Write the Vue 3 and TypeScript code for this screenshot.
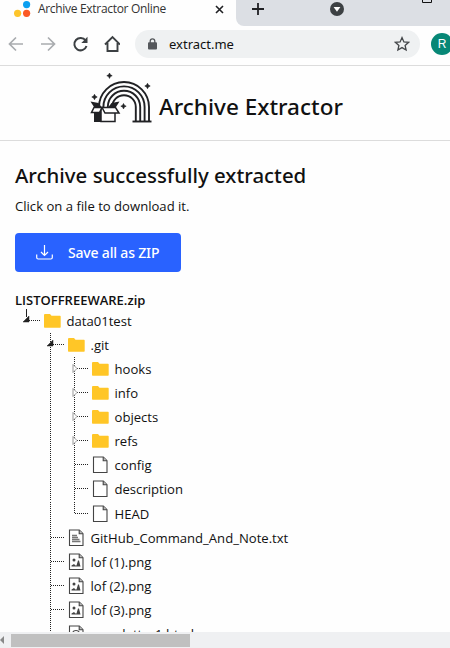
<script setup lang="ts">
type Kind = 'folder' | 'file' | 'text' | 'image' | 'html'
type Toggle = 'open' | 'closed' | 'none'
interface Row {
  name: string
  kind: Kind
  depth: number
  toggle: Toggle
  last?: boolean
}

const rows: Row[] = [
  { name: 'data01test', kind: 'folder', depth: 0, toggle: 'open', last: true },
  { name: '.git', kind: 'folder', depth: 1, toggle: 'open' },
  { name: 'hooks', kind: 'folder', depth: 2, toggle: 'closed' },
  { name: 'info', kind: 'folder', depth: 2, toggle: 'closed' },
  { name: 'objects', kind: 'folder', depth: 2, toggle: 'closed' },
  { name: 'refs', kind: 'folder', depth: 2, toggle: 'closed' },
  { name: 'config', kind: 'file', depth: 2, toggle: 'none' },
  { name: 'description', kind: 'file', depth: 2, toggle: 'none' },
  { name: 'HEAD', kind: 'file', depth: 2, toggle: 'none', last: true },
  { name: 'GitHub_Command_And_Note.txt', kind: 'text', depth: 1, toggle: 'none' },
  { name: 'lof (1).png', kind: 'image', depth: 1, toggle: 'none' },
  { name: 'lof (2).png', kind: 'image', depth: 1, toggle: 'none' },
  { name: 'lof (3).png', kind: 'image', depth: 1, toggle: 'none' },
  { name: 'newsletter1.html', kind: 'html', depth: 1, toggle: 'none' },
]
</script>

<template>
  <div class="window">
    <div class="tabs">
      <div class="tab">
        <svg class="favicon" width="18" height="18" viewBox="0 0 18 18">
          <circle cx="12.6" cy="4.6" r="3.6" fill="#0c9ff0" />
          <circle cx="3.6" cy="13.3" r="3.6" fill="#fdc52c" />
          <circle cx="12.6" cy="13.3" r="3.6" fill="#fb5a25" />
        </svg>
        <span class="tab-title">Archive Extractor Online</span>
        <svg class="close" width="9" height="9" viewBox="0 0 9 9">
          <path d="M1 1l7 7M8 1l-7 7" stroke="#202124" stroke-width="1.6" />
        </svg>
      </div>
      <div class="strip">
        <svg class="plus" width="12" height="12" viewBox="0 0 12 12">
          <path d="M6 0v12M0 6h12" stroke="#202124" stroke-width="1.8" />
        </svg>
        <svg class="search" width="14" height="14" viewBox="0 0 14 14">
          <circle cx="7" cy="7" r="7" fill="#3c4043" />
          <path d="M3.6 5h6.8L7 9.8z" fill="#fff" />
        </svg>
        <svg class="maximize" width="10" height="3" viewBox="0 0 10 3">
          <path d="M.5 0v2.5h9V0" fill="none" stroke="#111" />
        </svg>
      </div>
    </div>

    <div class="toolbar">
      <svg class="nav" width="120" height="24" viewBox="0 0 120 24" fill="none" stroke-width="1.7">
        <path d="M23 12H10M16 5.5L9.5 12l6.5 6.5" stroke="#a9acaf" />
        <path d="M41 12h13M48 5.5l6.5 6.5-6.5 6.5" stroke="#a9acaf" />
        <path d="M85.6 8.5A6.2 6.2 0 1 0 86.5 14" stroke="#3c4043" stroke-width="2" />
        <path d="M87.5 4.8v6.2h-6.2z" fill="#3c4043" />
        <path d="M105 12.5l7.5-7.5 7.5 7.5M107.5 11v8h10v-8" stroke="#3c4043" stroke-width="1.9" />
      </svg>
      <div class="address">
        <svg width="9" height="12" viewBox="0 0 9 12">
          <rect y="4.3" width="9" height="7.2" rx="1" fill="#55585c" />
          <path d="M2.2 5V3.2a2.3 2.3 0 0 1 4.6 0V5" fill="none" stroke="#55585c" stroke-width="1.3" />
        </svg>
        <span class="url">extract.me</span>
        <svg class="star" width="16" height="16" viewBox="0 0 16 16">
          <path
            d="M8 1.6l1.9 4.3 4.7.4-3.5 3.1 1 4.6L8 11.6 3.9 14l1-4.6-3.5-3.1 4.7-.4z"
            fill="none" stroke="#44474a" stroke-width="1.3" />
        </svg>
      </div>
      <div class="avatar">R</div>
    </div>

    <header class="brand">
      <svg class="logo" width="63" height="52" viewBox="0 0 63 52">
        <g fill="none" stroke="#202124" stroke-width="1.9">
          <path d="M9 34a25 25 0 0 1 50 0v14" />
          <path d="M13.4 34a20.600 20.600 0 0 1 41.200 0v14" />
          <path d="M17.800 34a16.200 16.200 0 0 1 32.400 0v14" />
          <path d="M22.200 34a11.800 11.800 0 0 1 23.600 0v14" />
          <path d="M42.5 48.5h19" />
        </g>
        <path d="M.5 28.500l8 1.500 3 4H4z" fill="#202124" />
        <path d="M29.500 28.500l-8 1.500-3 4H26z" fill="#202124" />
        <path d="M4 34h7v15H4z" fill="#202124" />
        <g fill="#fff" stroke="#202124" stroke-width="1.5">
          <path d="M11 35h14v13.5H11z" />
          <path d="M4 34.5h8L9.5 39.500h-8z" />
          <path d="M12 34.5h13.5l3.500 5.500H15z" />
        </g>
        <path d="M19.5 0l.9 1.800 1.800.9-1.800.9-.9 1.800-.9-1.800-1.800-.9 1.800-.9zM57.500 10.300l.9 1.800 1.800.9-1.800.9-.9 1.800-.9-1.800-1.800-.9 1.800-.9zM4.500 21.300l.9 1.800 1.800.9-1.800.9-.9 1.800-.9-1.800-1.800-.9 1.800-.9zM33.500 30.500l.9 1.800 1.800.9-1.800.9-.9 1.800-.9-1.800-1.800-.9 1.800-.9z" fill="#202124" stroke="#202124" stroke-width=".6" />
      </svg>
      <span class="brand-name">Archive Extractor</span>
    </header>

    <main class="content">
      <h1>Archive successfully extracted</h1>
      <p>Click on a file to download it.</p>
      <button class="save">
        <svg width="17" height="15" viewBox="0 0 17 15" fill="none" stroke="#fff" stroke-width="1.2">
          <path d="M8.5 0v10M5 7l3.500 3.500L12 7M.7 9.500v3q0 1.500 1.500 1.500h12.600q1.500 0 1.500-1.500v-3" />
        </svg>
        <span>Save all as ZIP</span>
      </button>
      <div class="archive">LISTOFFREEWARE.zip</div>
      <ul class="tree">
        <li v-for="row in rows" :key="row.name" class="row">
          <svg v-for="d in row.depth + 1" :key="d" class="cell" width="24" height="24" viewBox="0 0 24 24">
            <g fill="none" stroke="#222" stroke-dasharray="1 1">
              <path v-if="d > 1 && d <= row.depth" d="M11.5 0v24" />
              <template v-if="d === row.depth + 1">
                <path v-if="row.depth === 0" d="M11.5 0v8" stroke-dasharray="none" />
                <path v-else :d="row.last ? 'M11.5 0v12' : 'M11.5 0v24'" />
                <path d="M12 11.5h13" />
              </template>
            </g>
            <template v-if="d === row.depth + 1">
              <path v-if="row.toggle === 'open'" d="M14 7v6H8z" fill="#222" stroke="#222" stroke-width=".5" />
              <path v-if="row.toggle === 'closed'" d="M10 7.500l4 4-4 4z" fill="#fff" stroke="#999" />
            </template>
          </svg>
          <svg class="icon" width="17" height="18" viewBox="0 0 17 18">
            <path v-if="row.kind === 'folder'" d="M0 3Q0 2 1 2h5l1.500 1.700H16q.7 0 .7.700V15q0 .7-.7.700H.7Q0 15.700 0 15z" fill="#ffc627" />
            <g v-else fill="none" stroke="#444" stroke-width="1.1">
              <path d="M1.500 1h9.800l3.700 3.700V16.500H1.500z" fill="#fff" />
              <path d="M11.200 1v3.800H15" fill="#bbb" />
              <path v-if="row.kind === 'text'" d="M4 6.500h5M4 8.500h6M4 10.500h7.500M4 12.500h8.500" stroke="#777" stroke-width="1.3" />
              <template v-if="row.kind === 'image'">
                <path d="M3.500 13.500v-1l2.500-1.500 1.500 1.500h1L10 7.500h1l1.500 6z" fill="#444" stroke="none" />
                <circle cx="6" cy="7" r="1.5" fill="#444" stroke="none" />
              </template>
              <circle v-if="row.kind === 'html'" cx="8" cy="9" r="3.5" />
            </g>
          </svg>
          <span class="name">{{ row.name }}</span>
        </li>
      </ul>
    </main>

    <div class="scrollbar">
      <svg width="5" height="8" viewBox="0 0 5 8"><path d="M4 0v8L0 4z" fill="#888" /></svg>
      <div class="thumb"></div>
    </div>
  </div>
</template>

<style>
body {
  margin: 0;
  overflow: hidden;
}
</style>

<style scoped>
.window {
  width: 450px;
  height: 648px;
  overflow: hidden;
  display: flex;
  flex-direction: column;
  background: #fefefe;
  color: #111;
  font-family: 'Open Sans', 'Noto Sans', sans-serif;
}
svg {
  display: block;
  flex: none;
}
.tabs {
  height: 26px;
  flex: none;
  display: flex;
}
.tab {
  width: 236px;
  box-sizing: border-box;
  padding-left: 14px;
  display: flex;
  align-items: flex-start;
}
.tab-title {
  width: 177px;
  margin-left: 6px;
  font: 12px/18px 'Open Sans', sans-serif;
  letter-spacing: -0.31px;
  color: #333;
  white-space: nowrap;
}
.close {
  margin-top: 5px;
}
.strip {
  flex: 1;
  display: flex;
  background: #dcdfe4;
  border-bottom-left-radius: 8px;
}
.plus {
  margin: 3px 0 0 16px;
}
.search {
  margin: 2px 0 0 66px;
}
.maximize {
  margin-left: 78px;
}
.toolbar {
  height: 35px;
  flex: none;
  display: flex;
  align-items: flex-start;
  padding-top: 4px;
  border-bottom: 1px solid #dcdcdc;
}
.nav {
  margin-top: 2px;
}
.address {
  flex: none;
  width: 285px;
  height: 28px;
  box-sizing: border-box;
  margin-left: 15px;
  padding: 0 10px 0 13px;
  border-radius: 14px;
  background: #eff1f2;
  display: flex;
  align-items: center;
}
.url {
  flex: 1;
  margin-left: 12px;
  font: 13px/18px 'Noto Sans', sans-serif;
}
.avatar {
  flex: none;
  width: 22px;
  height: 22px;
  margin: 3px 0 0 11px;
  border-radius: 50%;
  background: #078776;
  color: #fff;
  font: 12px/22px 'Liberation Sans', sans-serif;
  text-align: center;
}
.brand {
  height: 74px;
  flex: none;
  display: flex;
  align-items: flex-start;
  padding-left: 90px;
  border-bottom: 1px solid #dcdcdc;
}
.logo {
  margin-top: 7px;
}
.brand-name {
  margin: 25px 0 0 6px;
  font: 500 22.5px/32px 'Noto Sans', sans-serif;
  white-space: nowrap;
}
.content {
  flex: 1;
  min-height: 0;
  overflow: hidden;
  padding: 0 15px;
}
h1 {
  margin: 20px 0 0;
  font: 500 20.4px/28px 'Noto Sans', sans-serif;
  white-space: nowrap;
}
p {
  margin: 7px 0 0;
  font-size: 13.1px;
  line-height: 20px;
}
.save {
  width: 166px;
  height: 39px;
  margin: 17px 0 0;
  padding: 0 0 0 21px;
  border: 0;
  border-radius: 4px;
  background: #2962ff;
  color: #fff;
  display: flex;
  align-items: center;
  gap: 15px;
  font: 500 14px/20px 'Noto Sans', sans-serif;
  letter-spacing: -0.18px;
  white-space: nowrap;
}
.archive {
  margin-top: 18px;
  height: 19px;
  font-size: 13px;
  font-weight: 600;
  line-height: 20px;
}
.tree {
  margin: 0;
  padding: 0;
  list-style: none;
}
.row {
  height: 24.07px;
  display: flex;
  align-items: center;
}
.cell {
  overflow: visible;
}
.icon {
  margin-left: 5px;
}
.name {
  margin-left: 5.5px;
  font-size: 13.1px;
  line-height: 20px;
  white-space: nowrap;
}
.scrollbar {
  height: 16px;
  flex: none;
  display: flex;
  align-items: center;
  background: #eff0f2;
}
.thumb {
  width: 179px;
  height: 13px;
  margin-left: 6px;
  background: #c0c0c0;
}
</style>
